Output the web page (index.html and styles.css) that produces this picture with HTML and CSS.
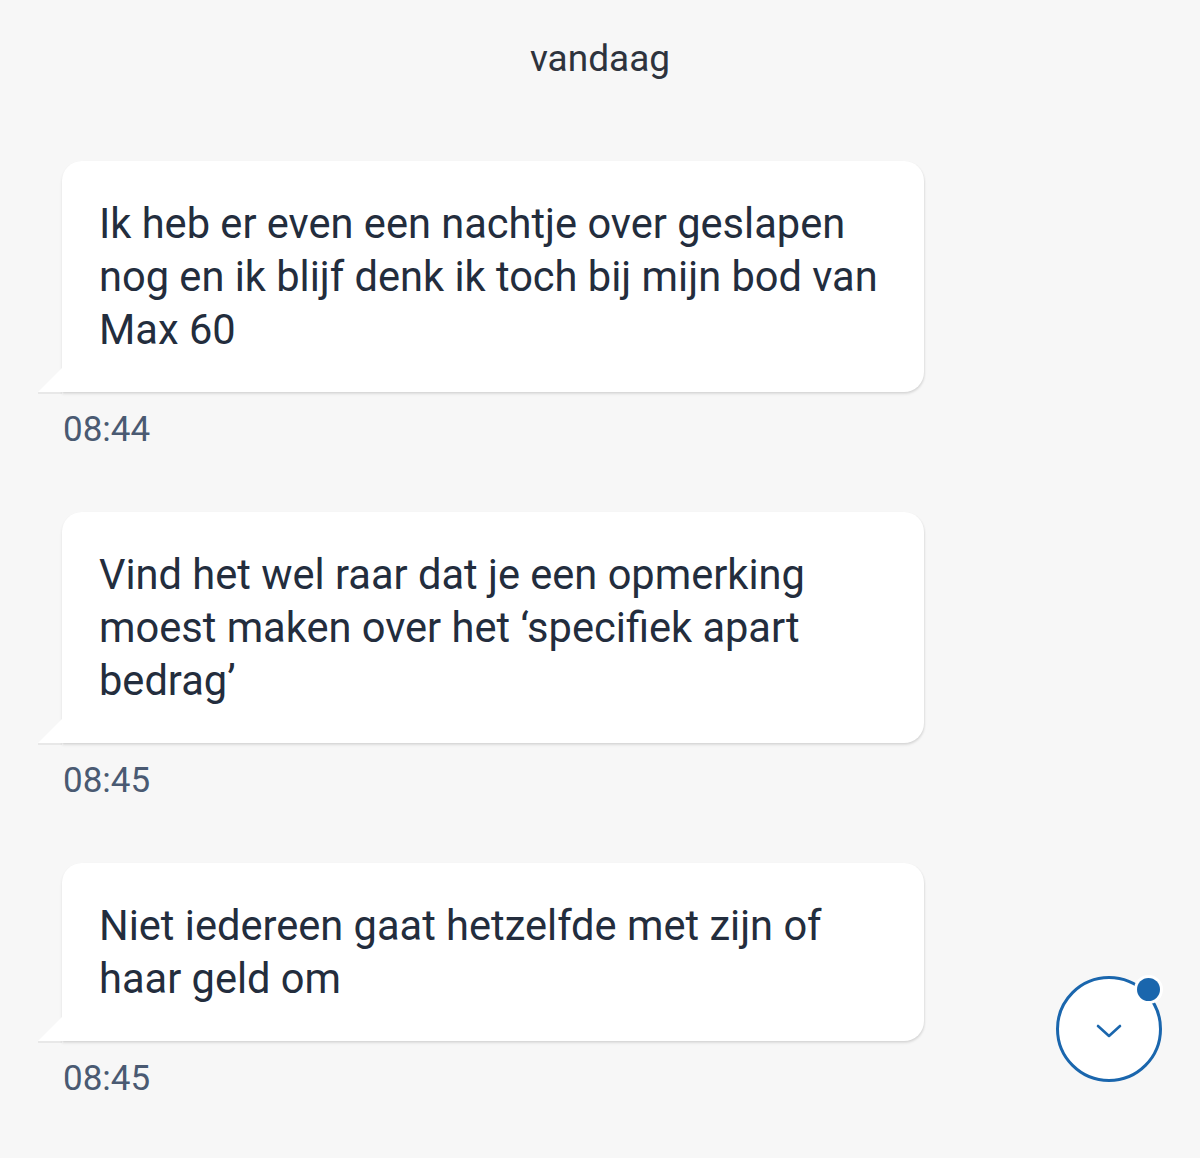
FILE: index.html
```html
<!DOCTYPE html>
<html lang="nl">
<head>
<meta charset="utf-8">
<link rel="stylesheet" href="styles.css">
</head>
<body>
<main class="chat">
  <div class="day">vandaag</div>
  <div class="msg">
    <div class="bubble">Ik heb er even een nachtje over geslapen nog en ik blijf denk ik toch bij mijn bod van Max 60</div>
    <div class="time">08:44</div>
  </div>
  <div class="msg">
    <div class="bubble">Vind het wel raar dat je een opmerking moest maken over het ‘specifiek apart bedrag’</div>
    <div class="time">08:45</div>
  </div>
  <div class="msg">
    <div class="bubble">Niet iedereen gaat hetzelfde met zijn of haar geld om</div>
    <div class="time">08:45</div>
  </div>
  <button class="scroll-down" aria-label="Naar beneden">
    <svg width="28" height="16" viewBox="0 0 28 16"><path d="M3 3 L14 13 L25 3" fill="none" stroke="#1a66ad" stroke-width="2.6" stroke-linecap="round" stroke-linejoin="round"/></svg>
    <span class="dot"></span>
  </button>
</main>
</body>
</html>
```
FILE: styles.css
```css
html, body {
  margin: 0;
  padding: 0;
  background: #f7f7f7;
}
body {
  font-family: Roboto, "Noto Sans", sans-serif;
  width: 1200px;
  height: 1158px;
  overflow: hidden;
}
.chat {
  position: relative;
  height: 1158px;
  padding: 37px 0 0 0;
  box-sizing: border-box;
}
.day {
  text-align: center;
  font-size: 37px;
  line-height: 44px;
  color: #2e333d;
  margin-bottom: 80px;
}
.msg {
  padding-left: 62px;
  margin-bottom: 61px;
}
.bubble {
  position: relative;
  width: 862px;
  box-sizing: border-box;
  background: #fff;
  border-radius: 20px 20px 20px 0;
  padding: 36px 30px 36px 37px;
  font-size: 41.6px;
  line-height: 53px;
  color: #232d3d;
  box-shadow: 0 2px 3px rgba(0,0,0,0.10), 1px 1px 2px rgba(0,0,0,0.05);
}
.bubble::before {
  content: "";
  position: absolute;
  left: -24px;
  bottom: 0;
  width: 0;
  height: 0;
  border-style: solid;
  border-width: 0 0 24px 24px;
  border-color: transparent transparent #fff transparent;
}
.bubble::after {
  content: "";
  position: absolute;
  left: -24px;
  bottom: -2px;
  width: 24px;
  height: 2px;
  background: rgba(0,0,0,0.06);
}
.time {
  margin-top: 17px;
  font-size: 35px;
  line-height: 42px;
  color: #4a5a72;
  padding-left: 1px;
}
.scroll-down {
  position: absolute;
  left: 1056px;
  top: 976px;
  width: 106px;
  height: 106px;
  border-radius: 50%;
  border: 3px solid #1a66ad;
  background: #fff;
  display: flex;
  align-items: center;
  justify-content: center;
  padding: 0;
  padding-top: 4px;
  box-sizing: border-box;
}
.dot {
  position: absolute;
  right: -1px;
  top: -1px;
  width: 23px;
  height: 23px;
  border-radius: 50%;
  background: #1a66ad;
  box-shadow: 0 0 0 3px #fff;
}
```
